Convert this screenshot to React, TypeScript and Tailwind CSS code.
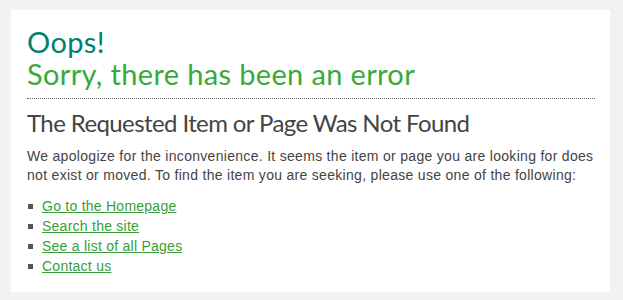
const links = [
  "Go to the Homepage",
  "Search the site",
  "See a list of all Pages",
  "Contact us",
];

export default function App() {
  return (
    <div className="w-[623px] h-[300px] bg-[#f2f2f0] pt-[10px] pl-[11px]">
      <div className="w-[599px] h-[282px] bg-white pt-[16px] pl-[16px] pr-[15px]">
        <h1 className="font-['Lato',sans-serif] text-[29px] leading-[32px] tracking-[0.35px]">
          <span className="block text-[#00806f]">Oops!</span>
          <span className="block text-[#3aa83a]">Sorry, there has been an error</span>
        </h1>
        <div className="mt-[8px] border-t border-dotted border-[#666]" />
        <h2 className="mt-[9px] font-['Lato',sans-serif] text-[24px] leading-[30px] tracking-[-0.6px] text-[#444]">
          The Requested Item or Page Was Not Found
        </h2>
        <p className="mt-[9px] font-['Liberation_Sans',Arial,sans-serif] text-[14px] leading-[19px] tracking-[0.3px] text-[#444]">
          We apologize for the inconvenience. It seems the item or page you are looking for does
          not exist or moved. To find the item you are seeking, please use one of the following:
        </p>
        <ul className="mt-[11px] font-['Liberation_Sans',Arial,sans-serif] text-[14px] leading-[20px] tracking-[0.25px]">
          {links.map((label) => (
            <li key={label} className="flex items-center">
              <span className="w-[5px] h-[5px] bg-[#555] ml-[1px] mr-[9px]" />
              <a href="#" className="text-[#3a9d3a] underline">
                {label}
              </a>
            </li>
          ))}
        </ul>
      </div>
    </div>
  );
}
